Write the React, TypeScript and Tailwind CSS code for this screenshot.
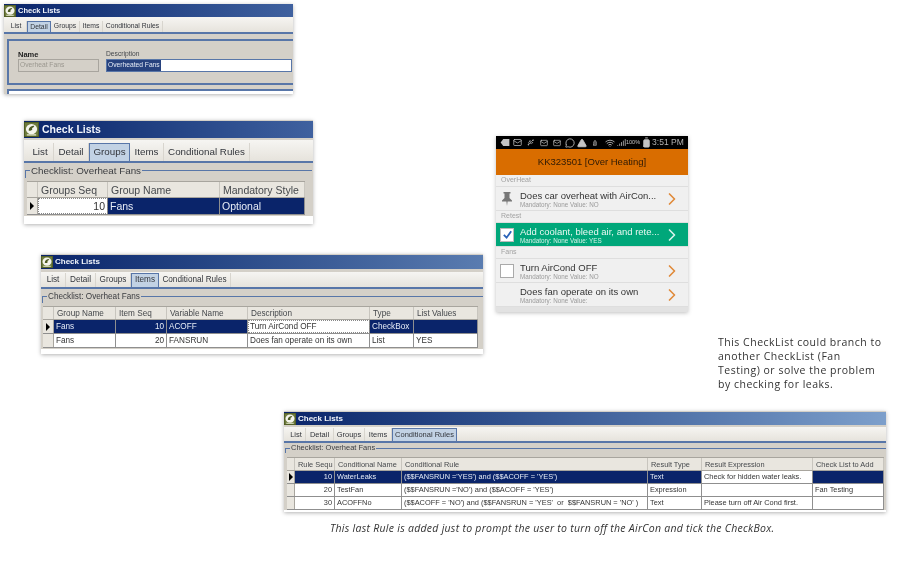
import { BatteryFull, ChevronRight, Mail, MessageCircle, Signal, Triangle, Usb, Wifi } from 'lucide-react';

type Cell = { text: string; right?: boolean; white?: boolean; dotted?: boolean };

function Logo({ size }: { size: string }) {
  return (
    <svg viewBox="0 0 16 16" className={`${size} shrink-0`}>
      <rect width="16" height="16" fill="#4c5a22" />
      <rect x="1" y="1" width="14" height="14" fill="#6d7a3c" />
      <ellipse cx="8" cy="7.5" rx="6" ry="5.5" fill="#f4f4ec" />
      <path d="M5 9c0-3 2.500-5 6-5-.5 1.500-1 2-2.500 2.500C9.500 8 8.500 10 5 9z" fill="#4c5a22" />
      <rect x="3" y="13" width="10" height="1.500" fill="#d8dcc0" />
    </svg>
  );
}

function TitleBar({ className, text, textClass, logo, to }: { className: string; text: string; textClass: string; logo: string; to: string }) {
  return (
    <div className={`flex items-center bg-gradient-to-r from-[#0a246a] ${to} ${className}`}>
      <Logo size={logo} />
      <span className={`font-bold text-[#f2f5fb] ${textClass}`}>{text}</span>
    </div>
  );
}

function Tabs({ items, active, height, fontClass, pad }: { items: [string, string][]; active: string; height: string; fontClass: string; pad: string }) {
  return (
    <div className={`flex shrink-0 items-end border-b-2 border-[#5876a8] bg-gradient-to-b from-[#f6f5f2] to-[#e6e3dc] ${height} ${pad} ${fontClass}`}>
      {items.map(([label, width]) => (
        <div
          key={label}
          className={`flex h-full shrink-0 items-center justify-center whitespace-nowrap text-[#33363c] ${width} ${
            label === active ? 'border border-b-0 border-[#5876a8] bg-[#c2d2e4]' : 'border-r border-[#d8d5ce]'
          }`}
        >
          {label}
        </div>
      ))}
    </div>
  );
}

function Grid({
  cols,
  header,
  rows,
  selected,
  rowClass,
  headClass,
}: {
  cols: string;
  header: string[];
  rows: Cell[][];
  selected: number;
  rowClass: string;
  headClass: string;
}) {
  return (
    <div className="flex flex-col">
      <div className={`grid border-y border-[#a8a59e] bg-[#e9e6df] ${cols} ${headClass}`}>
        <div className="border-r border-[#c8c5be]" />
        {header.map((h) => (
          <div key={h} className="overflow-hidden whitespace-nowrap border-r border-[#c8c5be] pl-[3px] text-[#45484c]">
            {h}
          </div>
        ))}
      </div>
      {rows.map((row, i) => (
        <div key={i} className={`grid border-b border-[#8f8f8f] ${cols} ${rowClass}`}>
          <div className="flex items-center justify-center border-r border-[#a8a59e] bg-[#e9e6df]">
            {i === selected && <span className="h-0 w-0 border-y-[4px] border-l-[4px] border-y-transparent border-l-black" />}
          </div>
          {row.map((c, j) => {
            const sel = i === selected && !c.white;
            return (
              <div
                key={j}
                className={`overflow-hidden whitespace-nowrap border-r border-[#8f8f8f] px-[2px] ${c.right ? 'text-right' : ''} ${
                  sel ? 'bg-[#0a246a] text-[#e6ecf6]' : 'bg-white text-[#333]'
                } ${c.dotted ? 'outline-1 -outline-offset-1 outline-dotted outline-[#888]' : ''}`}
              >
                {c.text}
              </div>
            );
          })}
        </div>
      ))}
    </div>
  );
}

function Legend({ text, className }: { text: string; className: string }) {
  return (
    <div className={`flex shrink-0 items-stretch ${className}`}>
      <div className="mt-[50%] hidden" />
      <div className="flex w-[5px] flex-col">
        <div className="flex-1" />
        <div className="flex-1 border-l border-t border-[#5876a8]" />
      </div>
      <span className="whitespace-nowrap px-px text-[#3a3c40]">{text}</span>
      <div className="flex flex-1 flex-col">
        <div className="flex-1" />
        <div className="flex-1 border-t border-[#5876a8]" />
      </div>
    </div>
  );
}

function PhoneRow({ title, value, icon, green }: { title: string; value: string; icon?: React.ReactNode; green?: boolean }) {
  return (
    <div className={`flex h-[24px] items-center border-b border-[#dedede] ${green ? 'bg-[#00a77a] text-[#e8f8f2]' : 'bg-[#f0f0f0] text-[#333]'}`}>
      <div className="flex w-[22px] shrink-0 justify-center">{icon}</div>
      <div className="min-w-0 flex-1 pl-[2px]">
        <div className="whitespace-nowrap text-[9.5px] font-medium leading-[11px]">{title}</div>
        <div className={`whitespace-nowrap text-[6.3px] leading-[7px] ${green ? 'text-[#d5f2e8]' : 'text-[#9a9a9a]'}`}>{value}</div>
      </div>
      <ChevronRight className={`mr-[6px] h-[20px] w-[20px] shrink-0 ${green ? 'text-[#d8f3ea]' : 'text-[#e08a3a]'}`} strokeWidth={2} />
    </div>
  );
}

function PhoneHead({ text }: { text: string }) {
  return <div className="flex h-[12px] items-center border-b border-[#dedede] bg-[#f0f0f0] pl-[5px] text-[7px] text-[#a2a2a2]">{text}</div>;
}

export default function App() {
  return (
    <div className="relative h-[575px] w-[897px] overflow-hidden bg-white font-['Liberation_Sans',sans-serif] [&>*]:blur-[0.3px]">
      {/* detail */}
      <div className="absolute left-[4px] top-[4px] flex h-[90px] w-[289px] flex-col bg-[#d4d0c8] shadow-[0_1px_4px_rgba(0,0,0,0.3)]">
        <TitleBar className="h-[13px] gap-[2px]" text="Check Lists" textClass="text-[7.5px]" logo="h-[12px] w-[12px]" to="to-[#3f619f]" />
        <Tabs
          items={[['List', 'w-[21px]'], ['Detail', 'w-[24px]'], ['Groups', 'w-[29px]'], ['Items', 'w-[23px]'], ['Conditional Rules', 'w-[60px]']]}
          active="Detail"
          height="h-[17px] pt-[4px]"
          fontClass="text-[6.8px]"
          pad="pl-[2px]"
        />
        <div className="ml-[3px] mt-[5px] flex h-[46px] shrink-0 items-start gap-[7px] border-2 border-r-0 border-[#5876a8] pl-[9px] pt-[8px] text-[6.7px]">
          <div className="flex w-[81px] flex-col">
            <span className="h-[10px] text-[7.5px] font-bold text-[#222]">Name</span>
            <div className="flex h-[13px] items-center border border-[#a8a59e] pl-[1px] text-[#9a978f]">Overheat Fans</div>
          </div>
          <div className="flex flex-1 flex-col">
            <span className="h-[10px] text-[#44474c]">Description</span>
            <div className="mr-[1px] flex h-[13px] items-center border border-[#5876a8] bg-white">
              <span className="bg-[#27427e] px-px text-[#e6ecf6]">Overheated Fans</span>
            </div>
          </div>
        </div>
        <div className="ml-[3px] mt-[4px] flex-1 border-l-2 border-t-2 border-[#5876a8] bg-white" />
      </div>

      {/* groups */}
      <div className="absolute left-[24px] top-[120px] flex h-[104px] w-[289px] flex-col bg-[#d4d0c8] shadow-[0_1px_4px_rgba(0,0,0,0.3)]">
        <TitleBar className="mt-px h-[17px] gap-[3px]" text="Check Lists" textClass="text-[10.5px]" logo="h-[15px] w-[15px]" to="to-[#3f619f]" />
        <Tabs
          items={[['List', 'w-[27px]'], ['Detail', 'w-[35px]'], ['Groups', 'w-[41px]'], ['Items', 'w-[34px]'], ['Conditional Rules', 'w-[86px]']]}
          active="Groups"
          height="h-[23px] pt-[3px] mt-[2px]"
          fontClass="text-[9.8px]"
          pad="pl-[3px]"
        />
        <Legend text="Checklist: Overheat Fans" className="mx-px h-[15px] text-[9.8px] leading-[15px]" />
        <div className="ml-[3px] mr-[8px] mt-[3px] text-[10.5px]">
          <Grid
            cols="grid-cols-[11px_70px_112px_85px]"
            headClass="h-[17px] leading-[16px]"
            rowClass="h-[17px] leading-[16px]"
            header={['Groups Seq', 'Group Name', 'Mandatory Style']}
            selected={0}
            rows={[[{ text: '10', right: true, white: true, dotted: true }, { text: 'Fans' }, { text: 'Optional' }]]}
          />
        </div>
        <div className="mt-[1px] flex-1 bg-white" />
      </div>

      {/* items */}
      <div className="absolute left-[41px] top-[254px] flex h-[100px] w-[442px] flex-col bg-[#d4d0c8] shadow-[0_1px_4px_rgba(0,0,0,0.3)]">
        <TitleBar className="mt-px h-[14px] gap-[2px]" text="Check Lists" textClass="text-[8px]" logo="h-[12px] w-[12px]" to="to-[#5a7cb0]" />
        <Tabs
          items={[['List', 'w-[25px]'], ['Detail', 'w-[30px]'], ['Groups', 'w-[35px]'], ['Items', 'w-[28px]'], ['Conditional Rules', 'w-[72px]']]}
          active="Items"
          height="h-[17px] mt-[3px] pt-[1px]"
          fontClass="text-[8.2px]"
          pad="pl-0"
        />
        <Legend text="Checklist: Overheat Fans" className="ml-px mt-px h-[13px] text-[8.2px] leading-[13px]" />
        <div className="ml-[2px] mr-[5px] mt-[3px] text-[8.2px]">
          <Grid
            cols="grid-cols-[11px_62px_51px_81px_122px_44px_64px]"
            headClass="h-[14px] leading-[13px]"
            rowClass="h-[14px] leading-[13px]"
            header={['Group Name', 'Item Seq', 'Variable Name', 'Description', 'Type', 'List Values']}
            selected={0}
            rows={[
              [{ text: 'Fans' }, { text: '10', right: true }, { text: 'ACOFF' }, { text: 'Turn AirCond OFF', white: true, dotted: true }, { text: 'CheckBox' }, { text: '' }],
              [{ text: 'Fans' }, { text: '20', right: true }, { text: 'FANSRUN' }, { text: 'Does fan operate on its own' }, { text: 'List' }, { text: 'YES' }],
            ]}
          />
        </div>
        <div className="mt-[1px] flex-1 bg-white" />
      </div>

      {/* rules */}
      <div className="absolute left-[284px] top-[411px] flex h-[101px] w-[602px] flex-col bg-[#d4d0c8] shadow-[0_1px_4px_rgba(0,0,0,0.3)]">
        <TitleBar className="mt-px h-[13px] gap-[2px]" text="Check Lists" textClass="text-[8px]" logo="h-[12px] w-[12px]" to="to-[#7d9fcb]" />
        <Tabs
          items={[['List', 'w-[19px]'], ['Detail', 'w-[28px]'], ['Groups', 'w-[31px]'], ['Items', 'w-[27px]'], ['Conditional Rules', 'w-[65px]']]}
          active="Conditional Rules"
          height="h-[16px] mt-[2px] pt-[1px]"
          fontClass="text-[7.5px]"
          pad="pl-[3px]"
        />
        <Legend text="Checklist: Overheat Fans" className="ml-px h-[10px] text-[7.5px] leading-[10px]" />
        <div className="ml-[3px] mr-[2px] mt-[4px] text-[7.4px]">
          <Grid
            cols="grid-cols-[8px_40px_67px_246px_54px_111px_71px]"
            headClass="h-[14px] leading-[13px]"
            rowClass="h-[13px] leading-[12px]"
            header={['Rule Sequ', 'Conditional Name', 'Conditional Rule', 'Result Type', 'Result Expression', 'Check List to Add']}
            selected={0}
            rows={[
              [{ text: '10', right: true }, { text: 'WaterLeaks' }, { text: "($$FANSRUN ='YES') and ($$ACOFF = 'YES')" }, { text: 'Text' }, { text: 'Check for hidden water leaks.', white: true }, { text: '' }],
              [{ text: '20', right: true }, { text: 'TestFan' }, { text: "($$FANSRUN ='NO') and ($$ACOFF = 'YES')" }, { text: 'Expression' }, { text: '' }, { text: 'Fan Testing' }],
              [{ text: '30', right: true }, { text: 'ACOFFNo' }, { text: "($$ACOFF = 'NO') and ($$FANSRUN = 'YES'\u00a0\u00a0or\u00a0\u00a0$$FANSRUN = 'NO' )" }, { text: 'Text' }, { text: 'Please turn off Air Cond first.' }, { text: '' }],
            ]}
          />
        </div>
        <div className="flex-1 bg-white" />
      </div>

      {/* phone */}
      <div className="absolute left-[496px] top-[136px] flex h-[176px] w-[192px] flex-col bg-[#e2e2e2] shadow-[0_1px_4px_rgba(0,0,0,0.25)]">
        <div className="flex h-[13px] items-center bg-black pl-[4px] text-[#c4c4c4]">
          <svg viewBox="0 0 10 8" className="h-[7px] w-[10px]" fill="currentColor">
            <path d="M3 0h7v8H3L0 4z" />
          </svg>
          <Mail className="ml-[3px] h-[9px] w-[9px]" />
          <Usb className="ml-[5px] h-[9px] w-[7px]" />
          <Mail className="ml-[6px] h-[8px] w-[8px]" />
          <Mail className="ml-[5px] h-[8px] w-[8px]" />
          <MessageCircle className="ml-[4px] h-[10px] w-[10px]" />
          <Triangle className="ml-[2px] h-[10px] w-[10px]" fill="currentColor" />
          <BatteryFull className="ml-[5px] h-[8px] w-[6px] rotate-[-90deg]" />
          <Wifi className="ml-[7px] h-[10px] w-[10px]" />
          <Signal className="ml-[2px] h-[9px] w-[9px]" />
          <span className="whitespace-nowrap text-[5.5px]">100%</span>
          <BatteryFull className="ml-px h-[11px] w-[11px] rotate-[-90deg]" fill="currentColor" />
          <span className="whitespace-nowrap text-[8.5px] leading-none text-[#b4b4b4]">3:51 PM</span>
        </div>
        <div className="flex h-[26px] items-center justify-center bg-[#d96d00] text-[9.5px] font-medium text-[#2e1a05]">KK323501 [Over Heating]</div>
        <PhoneHead text="OverHeat" />
        <PhoneRow
          title="Does car overheat with AirCon..."
          value="Mandatory: None Value: NO"
          icon={
            <svg viewBox="0 0 10 14" className="h-[14px] w-[10px]" fill="#777">
              <path d="M1.500 0h7v1.500H7.500V6L10 8.500V9.500H5.600L5 14 4.400 9.500H0V8.500L2.500 6V1.500H1.500z" />
            </svg>
          }
        />
        <PhoneHead text="Retest" />
        <PhoneRow
          green
          title="Add coolant, bleed air, and rete..."
          value="Mandatory: None Value: YES"
          icon={
            <div className="flex h-[14px] w-[14px] items-center justify-center border border-[#bbb] bg-white">
              <svg viewBox="0 0 12 12" className="h-[11px] w-[11px]">
                <path d="M2 6.500l3 3 5-7" fill="none" stroke="#2a62b8" strokeWidth="2" />
              </svg>
            </div>
          }
        />
        <PhoneHead text="Fans" />
        <PhoneRow title="Turn AirCond OFF" value="Mandatory: None Value: NO" icon={<div className="h-[14px] w-[14px] border border-[#aaa] bg-white" />} />
        <PhoneRow title="Does fan operate on its own" value="Mandatory: None Value:" />
      </div>

      {/* notes */}
      <p className="absolute left-[718px] top-[335px] w-[168px] font-['Open_Sans',sans-serif] text-[10.5px] leading-[14px] tracking-[0.5px] text-[#333]">
        This CheckList could branch to another CheckList (Fan Testing) or solve the problem by checking for leaks.
      </p>
      <p className="absolute left-[330px] top-[521px] whitespace-nowrap font-['Open_Sans',sans-serif] text-[10.5px] italic leading-[14px] tracking-[0.27px] text-[#333]">
        This last Rule is added just to prompt the user to turn off the AirCon and tick the CheckBox.
      </p>
    </div>
  );
}
